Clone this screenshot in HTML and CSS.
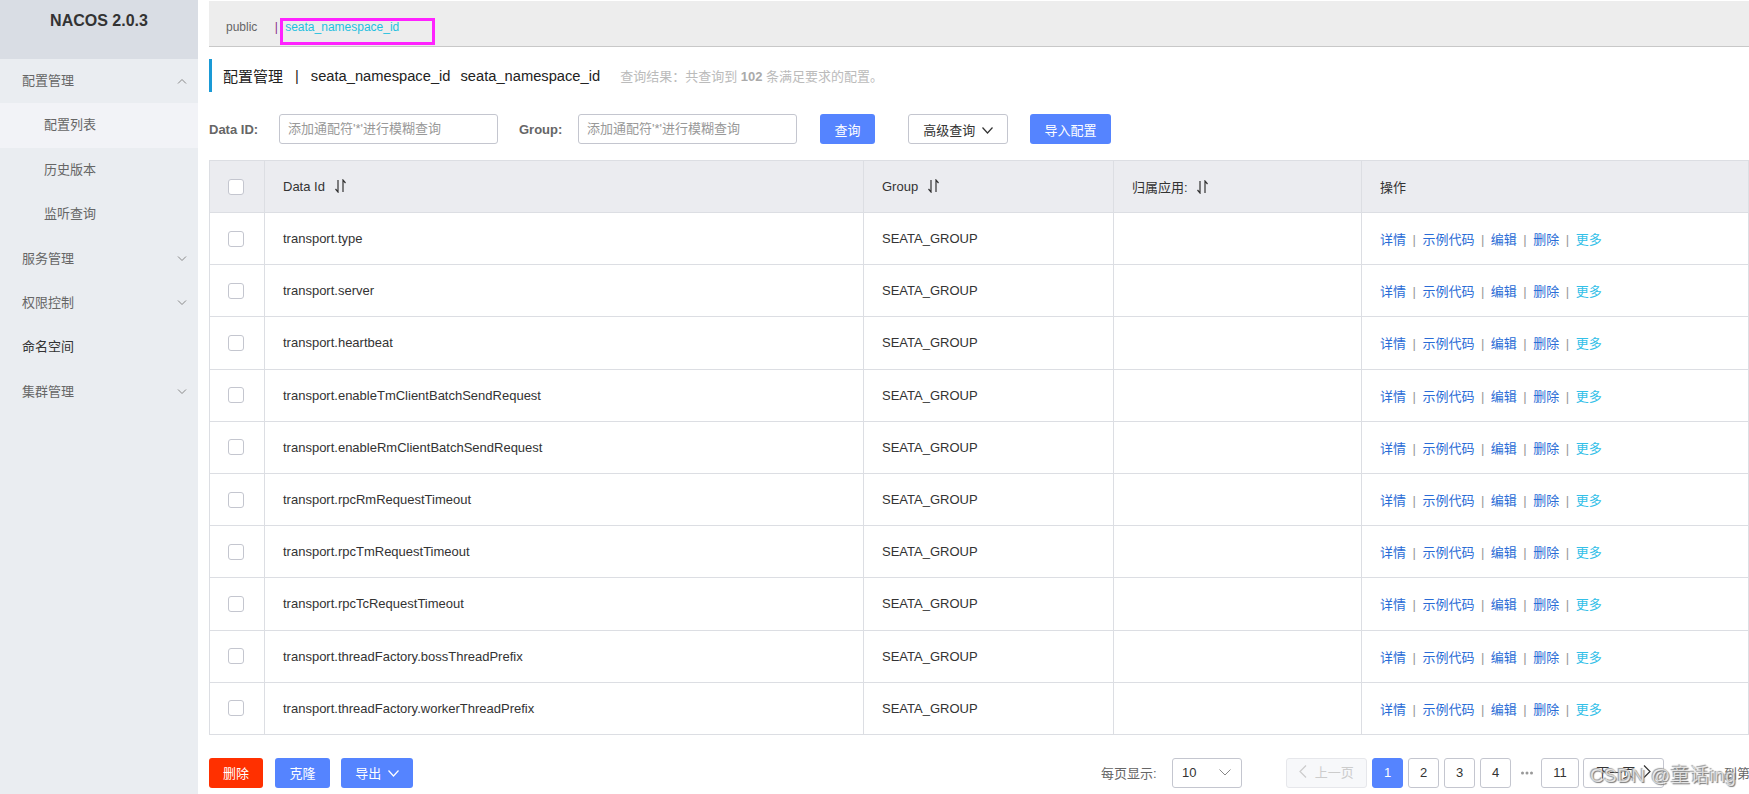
FILE: index.html
```html
<!DOCTYPE html>
<html lang="zh">
<head>
    <meta charset="UTF-8">
    <title>Nacos - 配置列表</title>
    <link rel="stylesheet" href="styles.css">
</head>
<body>
    <div class="layout">
        <div class="sidebar">
            <div class="sidebar-head">NACOS 2.0.3</div>
            <div class="menu-item">配置管理
                <svg class="chev" width="10" height="6" viewBox="0 0 10 6"><path d="M1 5.5 L5 1.5 L9 5.5" /></svg>
            </div>
            <div class="menu-sub active">配置列表</div>
            <div class="menu-sub">历史版本</div>
            <div class="menu-sub">监听查询</div>
            <div class="menu-item">服务管理
                <svg class="chev" width="10" height="6" viewBox="0 0 10 6"><path d="M1 0.5 L5 4.5 L9 0.5" /></svg>
            </div>
            <div class="menu-item">权限控制
                <svg class="chev" width="10" height="6" viewBox="0 0 10 6"><path d="M1 0.5 L5 4.5 L9 0.5" /></svg>
            </div>
            <div class="menu-item dark">命名空间</div>
            <div class="menu-item">集群管理
                <svg class="chev" width="10" height="6" viewBox="0 0 10 6"><path d="M1 0.5 L5 4.5 L9 0.5" /></svg>
            </div>
        </div>

        <div class="main">
            <div class="topbar">
                <span class="ns">public</span>
                <span class="ns-sep">|</span>
                <span class="ns current">seata_namespace_id</span>
                <div class="mark-box"></div>
            </div>

            <div class="page-title">
                <span class="title-cn">配置管理</span>
                <span class="title-sep">|</span>
                <span>seata_namespace_id</span>
                <span class="title-ns">seata_namespace_id</span>
                <span class="result">查询结果：共查询到 <b>102</b> 条满足要求的配置。</span>
            </div>

            <div class="search-row">
                <label class="search-label">Data ID:</label>
                <div class="input">添加通配符'*'进行模糊查询</div>
                <label class="search-label group-label">Group:</label>
                <div class="input">添加通配符'*'进行模糊查询</div>
                <button class="btn primary query-btn">查询</button>
                <button class="btn normal adv-btn">高级查询
                    <svg width="11" height="7" viewBox="0 0 11 7"><path d="M0.5 0.5 L5.5 6 L10.5 0.5" /></svg>
                </button>
                <button class="btn primary import-btn">导入配置</button>
            </div>

            <table class="config-table">
                <colgroup>
                    <col style="width:55px">
                    <col style="width:599px">
                    <col style="width:250px">
                    <col style="width:248px">
                    <col>
                </colgroup>
                <thead>
                    <tr>
                        <th class="cb-cell"><span class="checkbox"></span></th>
                        <th>Data Id <svg class="sort" width="11" height="14" viewBox="0 0 11 14"><path d="M3 1 V13 L0.5 10 M8 13 V1 L10.5 4" /></svg></th>
                        <th>Group <svg class="sort" width="11" height="14" viewBox="0 0 11 14"><path d="M3 1 V13 L0.5 10 M8 13 V1 L10.5 4" /></svg></th>
                        <th>归属应用: <svg class="sort" width="11" height="14" viewBox="0 0 11 14"><path d="M3 1 V13 L0.5 10 M8 13 V1 L10.5 4" /></svg></th>
                        <th>操作</th>
                    </tr>
                </thead>
                <tbody id="rows"></tbody>
            </table>

            <div class="bottom-bar">
                <button class="btn danger">删除</button>
                <button class="btn primary clone-btn">克隆</button>
                <button class="btn primary export-btn">导出
                    <svg width="11" height="7" viewBox="0 0 11 7"><path d="M0.5 0.5 L5.5 6 L10.5 0.5" /></svg>
                </button>

                <div class="pager">
                    <span class="page-size-label">每页显示:</span>
                    <div class="page-select">10
                        <svg width="12" height="7" viewBox="0 0 12 7"><path d="M0.5 0.5 L6 6 L11.5 0.5" /></svg>
                    </div>
                    <div class="page-btn prev">
                        <svg width="8" height="13" viewBox="0 0 8 13"><path d="M7 0.5 L1 6.5 L7 12.5" /></svg>
                        上一页
                    </div>
                    <div class="page-btn num current">1</div>
                    <div class="page-btn num">2</div>
                    <div class="page-btn num">3</div>
                    <div class="page-btn num">4</div>
                    <svg class="ellipsis" width="12" height="4" viewBox="0 0 12 4">
                        <circle cx="1.5" cy="2" r="1.5" /><circle cx="6" cy="2" r="1.5" /><circle cx="10.5" cy="2" r="1.5" />
                    </svg>
                    <div class="page-btn num wide">11</div>
                    <div class="page-btn next">下一页
                        <svg width="8" height="13" viewBox="0 0 8 13"><path d="M1 0.5 L7 6.5 L1 12.5" /></svg>
                    </div>
                    <span class="jump">到第</span>
                </div>
                <div class="watermark">CSDN @童话ing</div>
            </div>
        </div>
    </div>

    <script>
        const dataIds = [
            'transport.type',
            'transport.server',
            'transport.heartbeat',
            'transport.enableTmClientBatchSendRequest',
            'transport.enableRmClientBatchSendRequest',
            'transport.rpcRmRequestTimeout',
            'transport.rpcTmRequestTimeout',
            'transport.rpcTcRequestTimeout',
            'transport.threadFactory.bossThreadPrefix',
            'transport.threadFactory.workerThreadPrefix'
        ];

        const tbody = document.getElementById('rows');
        dataIds.forEach(id => {
            const tr = document.createElement('tr');
            tr.innerHTML = `
                <td class="cb-cell"><span class="checkbox"></span></td>
                <td>${id}</td>
                <td>SEATA_GROUP</td>
                <td></td>
                <td class="ops">
                    <a>详情</a><span class="op-sep">|</span><a>示例代码</a><span class="op-sep">|</span><a>编辑</a><span class="op-sep">|</span><a>删除</a><span class="op-sep">|</span><a class="more">更多</a>
                </td>
            `;
            tbody.appendChild(tr);
        });
    </script>
</body>
</html>
```

FILE: styles.css
```css
body {
    margin: 0;
    font-family: "Liberation Sans", "Noto Sans CJK SC", sans-serif;
    font-size: 13px;
    color: #333;
    background: #fff;
    overflow: hidden;
}
.layout {
    display: flex;
    height: 100vh;
}

.sidebar {
    width: 198px;
    flex-shrink: 0;
    background-color: #eaedf1;
}
.sidebar-head {
    height: 48px;
    padding-top: 11px;
    line-height: 20px;
    background-color: #d9dde4;
    text-align: center;
    font-weight: bold;
    font-size: 16px;
    color: #333;
}
.menu-item, .menu-sub {
    position: relative;
    height: 44.4px;
    line-height: 44px;
    padding-left: 22px;
    color: #666;
    font-size: 13px;
}
.menu-sub {
    padding-left: 44px;
}
.menu-sub.active {
    background-color: #f2f3f7;
}
.menu-item.dark {
    color: #333;
}
.chev {
    position: absolute;
    right: 11px;
    top: 19px;
    fill: none;
    stroke: #888;
    stroke-width: 1;
}

.main {
    flex: 1;
    margin-left: 11px;
    min-width: 0;
}
.topbar {
    position: relative;
    height: 45px;
    margin-top: 1px;
    padding-left: 17px;
    line-height: 52px;
    background-color: #ededed;
    border-bottom: 1px solid #c8c8c8;
    font-size: 12px;
}
.ns {
    color: #666;
}
.ns-sep {
    color: #8a2b8a;
    margin: 0 4px 0 14px;
}
.ns.current {
    color: #1fc0df;
}
.mark-box {
    position: absolute;
    left: 71px;
    top: 17px;
    width: 149px;
    height: 21px;
    border: 3px solid #ff22ff;
}

.page-title {
    display: flex;
    align-items: center;
    margin-top: 12px;
    height: 33px;
    border-left: 3px solid #1a9ad6;
    padding-left: 11px;
    font-size: 14.7px;
    color: #222;
}
.title-cn {
    font-size: 15px;
}
.title-sep {
    margin: 0 12px;
}
.title-ns {
    margin-left: 10px;
}
.result {
    margin-left: 20px;
    font-size: 13px;
    color: #bbb;
}
.result b {
    color: #aaa;
}

.search-row {
    display: flex;
    align-items: center;
    margin-top: 22px;
    height: 30px;
}
.search-row > * {
    flex-shrink: 0;
}
.search-label {
    font-weight: bold;
    color: #666;
    font-size: 13px;
    width: 70px;
}
.group-label {
    width: 59px;
    margin-left: 21px;
}
.input {
    box-sizing: border-box;
    width: 219px;
    height: 30px;
    line-height: 28px;
    padding-left: 8px;
    border: 1px solid #c4c6cf;
    border-radius: 3px;
    color: #999;
    font-size: 13px;
}
.btn {
    box-sizing: border-box;
    height: 30px;
    padding: 0 12px;
    border-radius: 3px;
    font-family: inherit;
    font-size: 13px;
    border: 1px solid transparent;
    cursor: pointer;
}
.btn svg {
    fill: none;
    stroke-width: 1.2;
    margin-left: 3px;
    vertical-align: 1px;
}
.btn.primary {
    background-color: #5584ff;
    color: #fff;
}
.btn.primary svg {
    stroke: #fff;
}
.btn.normal {
    background-color: #fff;
    border-color: #c4c6cf;
    color: #333;
}
.btn.normal svg {
    stroke: #333;
}
.btn.danger {
    background-color: #ff3000;
    color: #fff;
}
.query-btn {
    width: 55px;
    margin-left: 23px;
}
.adv-btn {
    width: 100px;
    margin-left: 33px;
}
.import-btn {
    width: 81px;
    margin-left: 22px;
}

.config-table {
    margin-top: 16px;
    width: 1540px;
    border-collapse: collapse;
    table-layout: fixed;
    font-size: 13px;
}
.config-table th, .config-table td {
    border: 1px solid #dcdee3;
    text-align: left;
    padding: 0 0 0 18px;
    white-space: nowrap;
    overflow: hidden;
}
.config-table th {
    height: 51px;
    background-color: #ebecf0;
    font-weight: normal;
    color: #333;
}
.config-table td {
    height: 51.2px;
}
.config-table .cb-cell {
    padding-left: 18px;
}
.checkbox {
    display: block;
    box-sizing: border-box;
    width: 16px;
    height: 16px;
    border: 1px solid #c4c6cf;
    border-radius: 3px;
    background: #fff;
}
.sort {
    margin-left: 6px;
    vertical-align: -2px;
    fill: none;
    stroke: #333;
    stroke-width: 1.2;
}
.ops a {
    color: #2a6cd6;
}
.ops a.more {
    color: #33c0e8;
}
.op-sep {
    margin: 0 6.5px;
    color: #999;
}

.bottom-bar {
    position: relative;
    display: flex;
    align-items: center;
    margin-top: 23px;
    height: 30px;
}
.bottom-bar > *, .pager > * {
    flex-shrink: 0;
}
.danger {
    width: 54px;
}
.clone-btn {
    width: 55px;
    margin-left: 12px;
}
.export-btn {
    width: 72px;
    margin-left: 11px;
    padding: 0;
}
.pager {
    display: flex;
    align-items: center;
    margin-left: 688px;
    white-space: nowrap;
}
.page-size-label {
    color: #666;
    width: 71px;
}
.page-select {
    position: relative;
    box-sizing: border-box;
    width: 70px;
    height: 30px;
    line-height: 28px;
    padding-left: 9px;
    border: 1px solid #c4c6cf;
    border-radius: 3px;
    color: #333;
}
.page-select svg {
    position: absolute;
    right: 10px;
    top: 10px;
    fill: none;
    stroke: #888;
}
.page-btn {
    box-sizing: border-box;
    height: 30px;
    line-height: 28px;
    border: 1px solid #c4c6cf;
    border-radius: 3px;
    text-align: center;
    color: #333;
    margin-left: 5px;
}
.page-btn svg {
    fill: none;
    stroke-width: 1.2;
    vertical-align: -1px;
}
.prev {
    width: 81px;
    margin-left: 44px;
    background-color: #f7f8fa;
    border-color: #e6e7eb;
    color: #ccc;
}
.prev svg {
    stroke: #ccc;
    margin-right: 4px;
}
.num {
    width: 31px;
}
.num.current {
    background-color: #5584ff;
    border-color: #5584ff;
    color: #fff;
}
.num.wide {
    width: 38px;
    margin-left: 8px;
}
.ellipsis {
    margin-left: 10px;
    fill: #999;
}
.next {
    width: 81px;
    margin-left: 4px;
}
.next svg {
    stroke: #333;
    margin-left: 4px;
}
.jump {
    margin-left: 60px;
    color: #666;
}
.watermark {
    position: absolute;
    left: 1381px;
    top: 2px;
    font-size: 19px;
    letter-spacing: 0.4px;
    color: rgba(240, 240, 240, 0.75);
    text-shadow: 1px 1px 1px #777, -1px -1px 1px #999;
    white-space: nowrap;
}
```
